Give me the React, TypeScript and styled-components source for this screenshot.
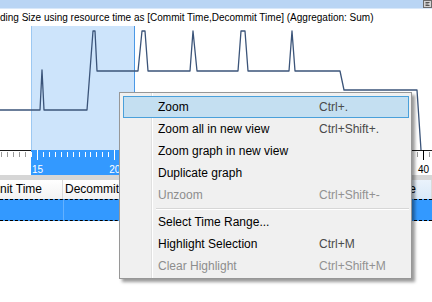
import styled, { createGlobalStyle } from "styled-components";

const GlobalStyle = createGlobalStyle`
  body {
    margin: 0;
    background: #fff;
    font-family: "Liberation Sans", Arial, sans-serif;
  }
`;

const Page = styled.div`
  position: relative;
  width: 432px;
  height: 302px;
  overflow: hidden;
  background: #fff;
  display: flex;
  flex-direction: column;
`;

const TopBar = styled.div`
  height: 8px;
  flex: 0 0 8px;
  background: #b9d5f4;
  border-bottom: 1px solid #d8e8f9;
  display: flex;
  justify-content: flex-end;
`;

const Title = styled.div`
  height: 17px;
  flex: 0 0 17px;
  font-size: 10px;
  line-height: 17px;
  color: #000;
  white-space: nowrap;
  overflow: hidden;
`;

const Plot = styled.svg`
  display: block;
  flex: 0 0 149px;
`;

const Splitter = styled.div`
  flex: 0 0 5px;
  background: #d6d6d6;
`;

const Header = styled.div`
  flex: 0 0 19px;
  display: flex;
  background: linear-gradient(#ffffff, #f2f2f2);
  font-size: 12px;
  line-height: 19px;
  color: #000;
`;

const HeaderCell = styled.div<{ w?: number; sorted?: boolean }>`
  ${p => (p.w ? `flex: 0 0 ${p.w}px;` : "flex: 1;")}
  box-sizing: border-box;
  padding: 0 2px;
  border-right: 1px solid #dadada;
  white-space: nowrap;
  overflow: hidden;
  text-align: ${p => (p.sorted ? "right" : "left")};
  padding-right: ${p => (p.sorted ? "15px" : "2px")};
  background: ${p => (p.sorted ? "linear-gradient(#eaf3fc, #d9e9f8)" : "transparent")};
  &:first-child {
    padding-left: 0;
  }
`;

const SelectedRow = styled.div`
  flex: 0 0 22px;
  box-sizing: border-box;
  display: flex;
  background: #3399ff;
  border-top: 1px dashed #000;
  border-bottom: 1px dashed #000;
`;

const RowCell = styled.div<{ w?: number }>`
  ${p => (p.w ? `flex: 0 0 ${p.w}px;` : "flex: 1;")}
  border-right: 1px solid #63b1ff;
  &:last-child {
    border-right: none;
  }
`;

const Menu = styled.div`
  position: absolute;
  left: 119px;
  top: 92px;
  width: 293px;
  height: 187px;
  box-sizing: border-box;
  padding: 3px 2px 1px 3px;
  background: #f0f0f0;
  border: 1px solid #979797;
  box-shadow: 3px 3px 3px rgba(0, 0, 0, 0.4);
  font-size: 12px;
  &::before {
    content: "";
    position: absolute;
    left: 31px;
    top: 0;
    bottom: 0;
    width: 1px;
    background: #e0e0e0;
    box-shadow: 1px 0 0 #fff;
  }
`;

const Item = styled.div<{ active?: boolean; disabled?: boolean }>`
  position: relative;
  height: 22px;
  box-sizing: border-box;
  display: flex;
  align-items: center;
  padding-left: 34px;
  border: 1px solid ${p => (p.active ? "#4aa0da" : "transparent")};
  background: ${p => (p.active ? "#c4dff1" : "transparent")};
  color: ${p => (p.disabled ? "#8d8d8d" : "#000")};
  white-space: nowrap;
`;

const Label = styled.span`
  flex: 0 0 161px;
`;

const Shortcut = styled.span<{ disabled?: boolean }>`
  color: ${p => (p.disabled ? "#929292" : "#4a4a4a")};
`;

const Separator = styled.div`
  height: 5px;
  display: flex;
  align-items: center;
  padding-left: 33px;
  &::after {
    content: "";
    flex: 1;
    height: 1px;
    background: #d7d7d7;
    box-shadow: 0 1px 0 #fff;
  }
`;

function PinIcon() {
  return (
    <svg width="10" height="8" viewBox="0 0 10 8">
      <rect x="1.5" y="0.5" width="8" height="7" fill="#d4d4d4" stroke="#6b6b6b" />
      <path d="M3.5 2.5h4M3.5 4h3M3.5 5.5h4" stroke="#555" strokeWidth="1" />
    </svg>
  );
}

const linePoints: [number, number][] = [
  [0, 110], [40, 110], [42, 70], [44, 110], [87, 110], [93, 31], [95, 31], [97, 71],
  [138, 71], [142, 31], [145, 31], [148, 71], [190, 71], [193, 31], [197, 71],
  [238, 71], [241, 31], [245, 31], [248, 71], [289, 71], [292, 31], [295, 71],
  [340, 71], [344, 90], [417, 90], [421, 150],
];

const selX = 31;
const selW = 104;
const major = 77.2;
const step = major / 13;

// only the labels not hidden behind the context menu
const labels = [
  { v: 15, x: 37 },
  { v: 20, x: 37 + major },
  { v: 40, x: 37 + 5 * major },
];

function Graph() {
  const ticks: { x: number; big: boolean }[] = [];
  for (let i = -6; i < 80; i++) {
    const x = 37 + i * step;
    if (x > 432) break;
    ticks.push({ x, big: i % 13 === 0 });
  }
  const inSel = (x: number) => x >= selX && x <= selX + selW;
  return (
    <Plot width="432" height="149" viewBox="0 26 432 149">
      <rect x={selX} y={26} width={selW} height={124} fill="#cde4fb" />
      <line x1={selX + 0.5} y1={26} x2={selX + 0.5} y2={150} stroke="#9cc8f2" />
      <line x1={selX + selW - 0.5} y1={26} x2={selX + selW - 0.5} y2={150} stroke="#4a98e6" />
      <rect x={selX} y={150} width={selW} height={25} fill="#3399ff" />
      <line x1={0} y1={150.5} x2={selX} y2={150.5} stroke="#1a1a1a" />
      <line x1={selX + selW} y1={150.5} x2={432} y2={150.5} stroke="#1a1a1a" />
      {ticks.map((t, i) => {
        const xx = Math.round(t.x) + 0.5;
        const sel = inSel(t.x);
        const col = sel ? "#ffffff" : t.big ? "#000" : "#9a9a9a";
        return (
          <line key={i} x1={xx} y1={t.big ? 150 : 152} x2={xx} y2={t.big ? 160 : 157} stroke={col} />
        );
      })}
      {labels.map(l => (
        <text
          key={l.v}
          x={l.x + 0.5}
          y={173}
          textAnchor="middle"
          fontSize="10"
          fontFamily="Liberation Sans, Arial, sans-serif"
          fill={inSel(l.x) ? "#fff" : "#000"}
        >
          {l.v}
        </text>
      ))}
      <polyline
        points={linePoints.map(p => p.join(",")).join(" ")}
        fill="none"
        stroke="#3b5479"
        strokeWidth="1.3"
        strokeLinejoin="round"
      />
    </Plot>
  );
}

const menuItems = [
  { label: "Zoom", key: "Ctrl+.", active: true },
  { label: "Zoom all in new view", key: "Ctrl+Shift+." },
  { label: "Zoom graph in new view" },
  { label: "Duplicate graph" },
  { label: "Unzoom", key: "Ctrl+Shift+-", disabled: true },
  { sep: true },
  { label: "Select Time Range..." },
  { label: "Highlight Selection", key: "Ctrl+M" },
  { label: "Clear Highlight", key: "Ctrl+Shift+M", disabled: true },
];

function App() {
  return (
    <>
      <GlobalStyle />
      <Page>
        <TopBar>
          <PinIcon />
        </TopBar>
        <Title>ding Size using resource time as [Commit Time,Decommit Time] (Aggregation: Sum)</Title>
        <Graph />
        <Splitter />
        <Header>
          <HeaderCell w={63}>nit Time</HeaderCell>
          <HeaderCell>Decommit Time</HeaderCell>
          <HeaderCell w={60} sorted>
            Size
          </HeaderCell>
        </Header>
        <SelectedRow>
          <RowCell w={63} />
          <RowCell />
        </SelectedRow>
        <Menu>
          {menuItems.map((m, i) =>
            m.sep ? (
              <Separator key={i} />
            ) : (
              <Item key={i} active={m.active} disabled={m.disabled}>
                <Label>{m.label}</Label>
                {m.key && <Shortcut disabled={m.disabled}>{m.key}</Shortcut>}
              </Item>
            )
          )}
        </Menu>
      </Page>
    </>
  );
}

export default App;
